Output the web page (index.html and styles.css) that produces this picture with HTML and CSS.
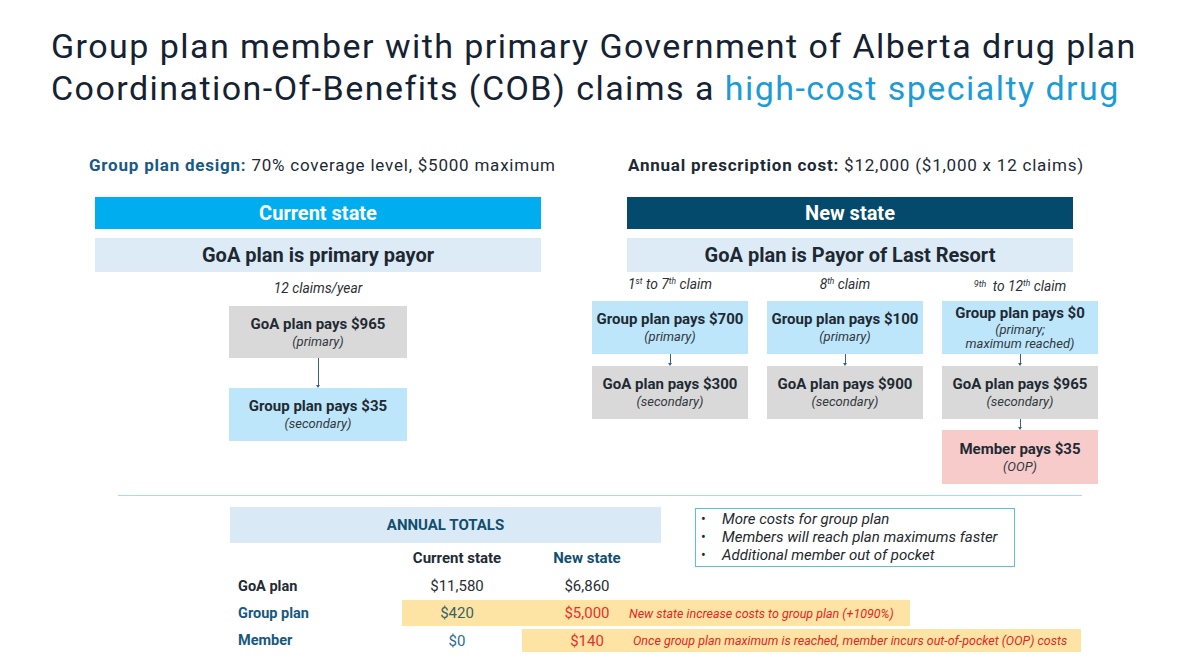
FILE: index.html
```html
<!DOCTYPE html>
<html lang="en">
<head>
<meta charset="utf-8">
<title>Group plan COB</title>
<link rel="stylesheet" href="styles.css">
</head>
<body>
<div class="slide">
  <h1 class="title">Group plan member with primary Government of Alberta drug plan<br>Coordination-Of-Benefits (COB) claims a <span class="hl-blue">high-cost specialty drug</span></h1>

  <div class="panels">
    <section class="col-left">
      <div class="plan-heading left-heading"><b class="blue-bold">Group plan design:</b> 70% coverage level, $5000 maximum</div>
      <div class="bar bar-current">Current state</div>
      <div class="sub">GoA plan is primary payor</div>
      <div class="claims-label left-label">12 claims/year</div>
      <div class="flow left-flow">
        <div class="box gray tall52"><div class="bt">GoA plan pays $965</div><div class="bs">(primary)</div></div>
        <div class="conn c30"><div class="stem"></div><div class="head"></div></div>
        <div class="box lblue tall53"><div class="bt">Group plan pays $35</div><div class="bs">(secondary)</div></div>
      </div>
    </section>

    <section class="col-right">
      <div class="plan-heading right-heading"><b>Annual prescription cost:</b> $12,000 ($1,000 x 12 claims)</div>
      <div class="bar bar-new">New state</div>
      <div class="sub">GoA plan is Payor of Last Resort</div>
      <div class="claim-cols">
        <div class="ccol">
          <div class="claims-label">1<sup>st</sup> to 7<sup>th</sup> claim</div>
          <div class="box lblue"><div class="bt">Group plan pays $700</div><div class="bs">(primary)</div></div>
          <div class="conn c12"><div class="stem"></div><div class="head"></div></div>
          <div class="box gray"><div class="bt">GoA plan pays $300</div><div class="bs">(secondary)</div></div>
        </div>
        <div class="ccol">
          <div class="claims-label">8<sup>th</sup> claim</div>
          <div class="box lblue"><div class="bt">Group plan pays $100</div><div class="bs">(primary)</div></div>
          <div class="conn c12"><div class="stem"></div><div class="head"></div></div>
          <div class="box gray"><div class="bt">GoA plan pays $900</div><div class="bs">(secondary)</div></div>
        </div>
        <div class="ccol">
          <div class="claims-label"><span class="tiny">9th</span> to 12<sup>th</sup> claim</div>
          <div class="box lblue"><div class="bt">Group plan pays $0</div><div class="bs tight">(primary;<br>maximum reached)</div></div>
          <div class="conn c12"><div class="stem"></div><div class="head"></div></div>
          <div class="box gray"><div class="bt">GoA plan pays $965</div><div class="bs">(secondary)</div></div>
          <div class="conn c11"><div class="stem"></div><div class="head"></div></div>
          <div class="box pink tall54"><div class="bt">Member pays $35</div><div class="bs">(OOP)</div></div>
        </div>
      </div>
    </section>
  </div>

  <div class="divider"></div>

  <div class="totals">
    <div class="totals-head">ANNUAL TOTALS</div>
    <div class="notes-box">
      <ul class="notes">
        <li><span class="dot">•</span><span>More costs for group plan</span></li>
        <li><span class="dot">•</span><span>Members will reach plan maximums faster</span></li>
        <li><span class="dot">•</span><span>Additional member out of pocket</span></li>
      </ul>
    </div>
    <div class="trow colhead">
      <div class="lab"></div>
      <div class="cur">Current state</div>
      <div class="new new-head">New state</div>
    </div>
    <div class="trow full goa">
      <div class="lab">GoA plan</div>
      <div class="cur">$11,580</div>
      <div class="new">$6,860</div>
    </div>
    <div class="trow full grp">
      <div class="lab bluelab">Group plan</div>
      <div class="yhl yhl-group">
        <div class="cur teal">$420</div>
        <div class="new red">$5,000</div>
        <div class="note">New state increase costs to group plan (+1090%)</div>
      </div>
    </div>
    <div class="trow full mem">
      <div class="lab bluelab">Member</div>
      <div class="cur blueval">$0</div>
      <div class="yhl yhl-member">
        <div class="new red">$140</div>
        <div class="note note-m">Once group plan maximum is reached, member incurs out-of-pocket (OOP) costs</div>
      </div>
    </div>
  </div>
</div>
</body>
</html>
```

FILE: styles.css
```css
* { box-sizing: border-box; }

html, body {
  margin: 0;
  padding: 0;
  background: #ffffff;
}

body {
  width: 1200px;
  height: 670px;
  overflow: hidden;
  font-family: Roboto, "Liberation Sans", Arial, sans-serif;
  color: #1d2a35;
}

.slide {
  width: 1200px;
  height: 670px;
}

.title {
  margin: 0;
  padding: 25px 0 0 51px;
  font-size: 34px;
  line-height: 42px;
  font-weight: 400;
  letter-spacing: 1.45px;
  color: #152232;
  white-space: nowrap;
}

.hl-blue { color: #1c9bd7; }

.panels {
  display: flex;
  margin-top: 46px;
}

.col-left {
  margin-left: 95px;
  width: 446px;
}

.col-right {
  margin-left: 51px;
  width: 505px;
}

.plan-heading {
  font-size: 17px;
  line-height: 20px;
  height: 20px;
  letter-spacing: 0.78px;
  white-space: nowrap;
  margin-bottom: 22px;
  color: #1d2a35;
}

.left-heading { margin-left: -6px; }
.right-heading { padding-left: 36px; }

.plan-heading b { font-weight: 700; }
.blue-bold { color: #17598a; }

.bar {
  height: 32px;
  display: flex;
  align-items: center;
  justify-content: center;
  color: #ffffff;
  font-weight: 700;
  font-size: 20px;
}

.bar-current { background: #00aeef; }
.bar-new { background: #034a6c; margin-left: 35px; width: 446px; }

.sub {
  margin-top: 9px;
  height: 34px;
  background: #dcebf6;
  display: flex;
  align-items: center;
  justify-content: center;
  font-weight: 700;
  font-size: 20px;
  color: #1d2833;
}

.col-right .sub { margin-left: 35px; width: 446px; }

.claims-label {
  font-size: 13.8px;
  font-style: italic;
  line-height: 18px;
  height: 18px;
  text-align: center;
  color: #2a2f35;
  white-space: nowrap;
}

.claims-label sup {
  font-size: 8.5px;
  line-height: 0;
  vertical-align: 5px;
}

.claims-label .tiny {
  font-size: 9px;
  vertical-align: 4px;
  margin-right: 3px;
}

.left-label { margin-top: 7px; }

.flow {
  display: flex;
  flex-direction: column;
  align-items: center;
}

.left-flow { margin-top: 9px; }
.left-flow .box { width: 178px; }

.claim-cols {
  margin-top: 3px;
  display: grid;
  grid-template-columns: 156px 156px 156px;
  column-gap: 19px;
}

.ccol {
  display: flex;
  flex-direction: column;
}

.ccol .claims-label { margin-bottom: 8px; }

.box {
  height: 53px;
  display: flex;
  flex-direction: column;
  align-items: center;
  justify-content: center;
  text-align: center;
}

.tall52 { height: 52px; }
.tall53 { height: 53px; }
.tall54 { height: 54px; }

.gray { background: #d9d9d9; }
.lblue { background: #bde6fb; }
.pink { background: #f8cbcb; }

.bt {
  font-size: 15px;
  font-weight: 700;
  line-height: 18px;
  color: #1f2a33;
  white-space: nowrap;
}

.bs {
  font-size: 13px;
  font-style: italic;
  line-height: 17px;
  color: #33383d;
  white-space: nowrap;
}

.bs.tight { line-height: 14px; margin-top: 1px; }

.conn {
  display: flex;
  flex-direction: column;
  align-items: center;
}

.c30 { height: 30px; }
.c12 { height: 12px; }
.c11 { height: 11px; }

.stem {
  flex: 1;
  width: 1px;
  background: #3d6080;
}

.head {
  width: 0;
  height: 0;
  border-left: 2px solid transparent;
  border-right: 2px solid transparent;
  border-top: 3px solid #3d6080;
}

.divider {
  margin: 11px 0 0 118px;
  width: 964px;
  height: 1px;
  background: #a9dced;
}

.totals {
  margin: 11px 0 0 230px;
  display: grid;
  grid-template-columns: 431px 34px 320px 67px;
  grid-template-rows: 36px 29px 28px 26px 26px;
  row-gap: 0;
}

.totals-head {
  grid-column: 1;
  grid-row: 1;
  background: #d9eaf6;
  display: flex;
  align-items: center;
  justify-content: center;
  font-weight: 700;
  font-size: 15px;
  color: #124e70;
}

.notes-box {
  grid-column: 3;
  grid-row: 1 / 3;
  align-self: start;
  margin-top: 1px;
  height: 59px;
  border: 1.5px solid #5cc0e6;
  padding: 2px 0 0 5px;
}

.notes {
  list-style: none;
  margin: 0;
  padding: 0;
}

.notes li {
  display: flex;
  font-size: 15px;
  font-style: italic;
  line-height: 17.8px;
  color: #24292e;
  white-space: nowrap;
}

.notes .dot {
  width: 21px;
  font-style: normal;
  font-size: 14px;
}

.trow {
  display: flex;
  align-items: center;
  padding-left: 8px;
  font-size: 15px;
  white-space: nowrap;
}

.colhead { grid-column: 1; grid-row: 2; }
.goa { grid-row: 3; }
.grp { grid-row: 4; }
.mem { grid-row: 5; margin-top: 3px; }

.full { grid-column: 1 / -1; }

.trow .lab {
  width: 164px;
  font-weight: 700;
  font-size: 14.5px;
  color: #1f2b35;
}

.trow .bluelab { color: #16587f; }

.trow .cur {
  width: 110px;
  text-align: center;
  color: #2a2f33;
}

.trow .new {
  width: 84px;
  margin-left: 33px;
  text-align: center;
  color: #2a2f33;
}

.colhead .cur {
  font-weight: 700;
  font-size: 15px;
  color: #1f2b35;
}

.colhead .new-head {
  font-weight: 700;
  font-size: 15px;
  color: #124e70;
}

.yhl {
  display: flex;
  align-items: center;
  align-self: stretch;
  background: #fde4a5;
}

.yhl-group { width: 508px; }

.yhl-member {
  margin-left: 10px;
  width: 559px;
  padding-left: 23px;
}

.yhl-member .new { margin-left: 0; }

.trow .teal { color: #3a6263; }
.trow .blueval { color: #2b6d8c; }
.trow .red { color: #e8312a; }

.note {
  font-size: 12.5px;
  font-style: italic;
  color: #e5261f;
}

.note-m { padding-left: 4px; }
```
